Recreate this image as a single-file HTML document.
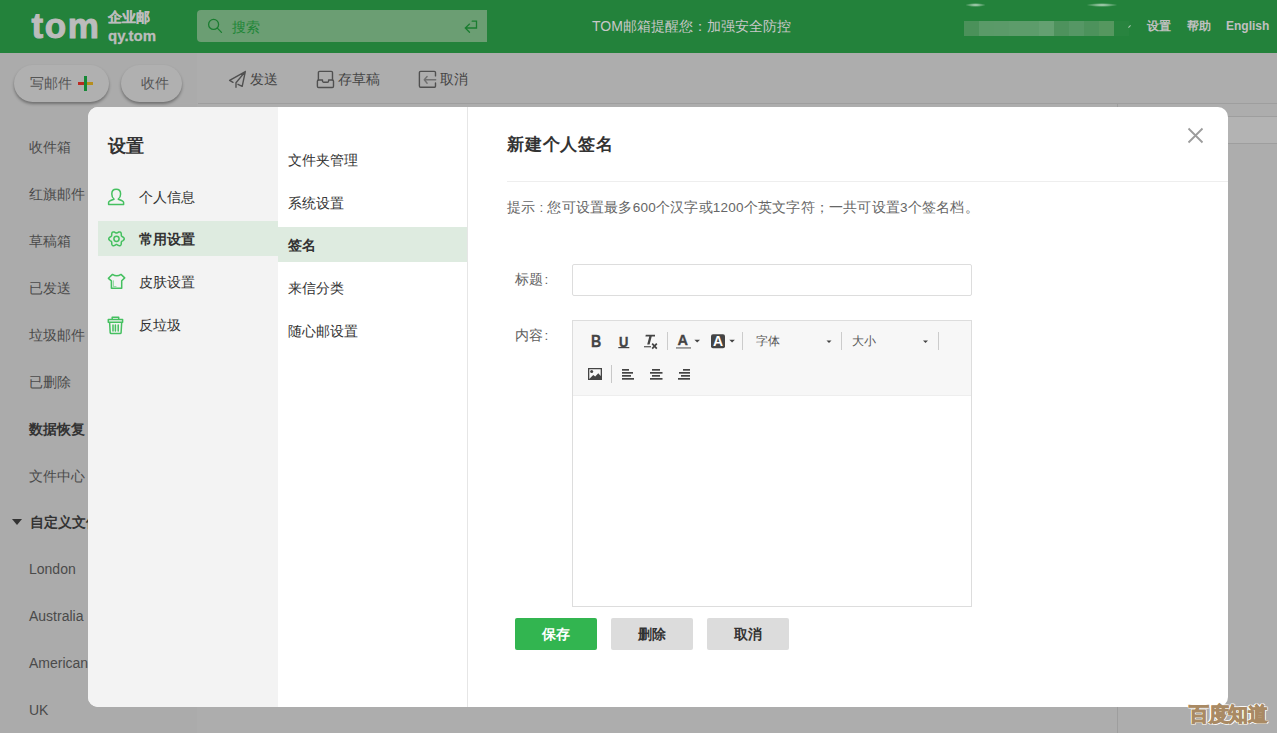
<!DOCTYPE html>
<html><head><meta charset="utf-8">
<style>
*{margin:0;padding:0;box-sizing:border-box}
html,body{width:1277px;height:733px;overflow:hidden;background:#adadad;font-family:"Liberation Sans",sans-serif;position:relative}
.a{position:absolute;white-space:nowrap}
svg{position:absolute;overflow:visible}
#hdr{position:absolute;left:0;top:0;width:1277px;height:53px;background:#23823b}
#side{position:absolute;left:0;top:53px;width:197px;height:680px;background:#ababab}
.si{position:absolute;margin-top:-1px;left:29px;font-size:14px;color:#4a4a4a;line-height:20px;white-space:nowrap}
.tb{position:absolute;top:69px;font-size:14px;color:#444;line-height:20px;white-space:nowrap}
#modal{position:absolute;left:88px;top:107px;width:1140px;height:600px;background:#fff;border-radius:10px;overflow:hidden}
#mleft{position:absolute;left:0;top:0;width:190px;height:600px;background:#f3f3f3}
#mmid{position:absolute;left:190px;top:0;width:190px;height:600px;background:#fff;border-right:1px solid #e6e6e6}
.mi{position:absolute;font-size:14px;color:#333;line-height:20px;white-space:nowrap}
.btn{position:absolute;top:511px;width:82px;height:32px;border-radius:2px;font-size:14px;line-height:32px;text-align:center;font-weight:bold}
.sep{position:absolute;width:1px;background:#ccc}
.ed{position:absolute;font-size:16px;font-weight:bold;color:#444;line-height:16px}
</style></head><body>
<div id="hdr">
  <div class="a" style="left:31.5px;top:5.5px;font-size:35px;line-height:40px;font-weight:bold;color:#bcbcbc;letter-spacing:1.6px;-webkit-text-stroke:1px #bcbcbc">tom</div>
  <div class="a" style="left:108px;top:9px;font-size:14px;font-weight:bold;color:#bcbcbc;line-height:16px;-webkit-text-stroke:0.3px #bcbcbc">企业邮</div>
  <div class="a" style="left:108px;top:27px;font-size:15px;font-weight:bold;color:#bcbcbc;line-height:18px;-webkit-text-stroke:0.3px #bcbcbc">qy.tom</div>
  <div class="a" style="left:197px;top:10px;width:290px;height:32px;background:#6b9e73;border-radius:4px 0 0 4px"></div>
  <svg style="left:0;top:0" width="1" height="1"><g fill="none" stroke="#1a7d30" stroke-width="1.3" stroke-linecap="round">
    <circle cx="213.6" cy="24.4" r="5"/><path d="M217.6 28.4L221.5 32.4"/>
    <path d="M472.2 21.2H476.5V28H465.3M469.5 24.1L465.3 28L469.5 32.3"/>
  </g></svg>
  <div class="a" style="left:232px;top:17px;font-size:14px;color:#1f8738;line-height:20px">搜索</div>
  <div class="a" style="left:592px;top:16px;font-size:14px;color:#c8c8c8;line-height:20px">TOM邮箱提醒您：加强安全防控</div>
  <div class="a" style="left:964px;top:21px;height:15px;display:flex">
    <i style="width:15px;background:#4b915a"></i><i style="width:15px;background:#5a9a68"></i><i style="width:15px;background:#5b9a69"></i><i style="width:15px;background:#5d9c6b"></i><i style="width:15px;background:#5d9c6b"></i><i style="width:15px;background:#64a071"></i><i style="width:15px;background:#4e925d"></i><i style="width:15px;background:#569765"></i><i style="width:15px;background:#4d925c"></i><i style="width:15px;background:#55975f"></i><i style="width:15px;background:#28843f"></i>
  </div>
  <div class="a" style="left:965px;top:3px;width:21px;height:4px;border-radius:50%;background:radial-gradient(ellipse at center,rgba(230,240,232,.8),rgba(230,240,232,0) 70%)"></div>
  <div class="a" style="left:1086px;top:3px;width:32px;height:4px;border-radius:50%;background:radial-gradient(ellipse at center,rgba(230,240,232,.8),rgba(230,240,232,0) 70%)"></div>
  <div class="a" style="left:1128px;top:26px;width:3px;height:1px;background:#a9c8b0;transform:rotate(-45deg)"></div>
  <div class="a" style="left:1147px;top:17px;font-size:12px;font-weight:bold;color:#c0c0c0;line-height:18px">设置</div>
  <div class="a" style="left:1187px;top:17px;font-size:12px;font-weight:bold;color:#c0c0c0;line-height:18px">帮助</div>
  <div class="a" style="left:1226px;top:17px;font-size:12px;font-weight:bold;color:#c0c0c0;line-height:18px">English</div>
</div>
<div id="side">
  <div class="si" style="top:85px">收件箱</div>
  <div class="si" style="top:132px">红旗邮件</div>
  <div class="si" style="top:179px">草稿箱</div>
  <div class="si" style="top:226px">已发送</div>
  <div class="si" style="top:273px">垃圾邮件</div>
  <div class="si" style="top:320px">已删除</div>
  <div class="si" style="top:367px;font-weight:bold;color:#333">数据恢复</div>
  <div class="si" style="top:414px">文件中心</div>
  <div class="a" style="left:12px;top:466px;width:0;height:0;border-left:5.5px solid transparent;border-right:5.5px solid transparent;border-top:6.5px solid #333"></div>
  <div class="si" style="left:30px;top:460px;font-weight:bold;color:#333">自定义文件夹</div>
  <div class="si" style="top:507px">London</div>
  <div class="si" style="top:554px">Australia</div>
  <div class="si" style="top:601px">American</div>
  <div class="si" style="top:648px">UK</div>
</div>
<!-- right panel lines -->
<div class="a" style="left:198px;top:103px;width:1079px;height:1px;background:#9e9e9e"></div>
<div class="a" style="left:1117px;top:103px;width:1px;height:630px;background:#9e9e9e"></div>
<div class="a" style="left:1117px;top:116px;width:160px;height:28px;background:#b3b3b3;border-top:1px solid #9e9e9e;border-bottom:1px solid #9e9e9e"></div>

<div class="a" style="left:14px;top:65px;width:95px;height:37px;border-radius:19px;background:#b0b0b0;box-shadow:0 2px 3px rgba(0,0,0,.35)"></div>
<div class="a" style="left:30px;top:73px;font-size:14px;color:#555;line-height:20px">写邮件</div>
<div class="a" style="left:78px;top:82px;width:6px;height:3px;background:#bb2a22"></div>
<div class="a" style="left:84px;top:82px;width:9px;height:3px;background:#b68e1e"></div>
<div class="a" style="left:84px;top:76px;width:3px;height:15px;background:#168936"></div>
<div class="a" style="left:121px;top:65px;width:61px;height:37px;border-radius:19px;background:#b0b0b0;box-shadow:0 2px 3px rgba(0,0,0,.35)"></div>
<div class="a" style="left:141px;top:73px;font-size:14px;color:#555;line-height:20px">收件</div>
<svg style="left:0;top:0" width="1" height="1"><g fill="none" stroke="#505050" stroke-width="1.4" stroke-linejoin="round" stroke-linecap="round">
  <path d="M245.3 71.6L229.6 80.4L233 82.3M245.3 71.6L236 82.8V87.3M245.3 71.6L242.2 86.3L238 84.3"/>
  <path d="M318.4 80V72.6a1.2 1.2 0 0 1 1.2-1.2H331.3a1.2 1.2 0 0 1 1.2 1.2V80"/>
  <path d="M317.4 81.2a1.2 1.2 0 0 1 1.2-1.2H322.5V81a1.2 1.2 0 0 0 1.2 1.2H327.4a1.2 1.2 0 0 0 1.2-1.2V80H332.3a1.2 1.2 0 0 1 1.2 1.2V86.3a1.2 1.2 0 0 1-1.2 1.2H318.6a1.2 1.2 0 0 1-1.2-1.2Z"/>
  <path d="M435.5 75.9V72.6a1.2 1.2 0 0 0-1.2-1.2H420.6a1.2 1.2 0 0 0-1.2 1.2V86.1a1.2 1.2 0 0 0 1.2 1.2H434.3a1.2 1.2 0 0 0 1.2-1.2V83"/>
  <path d="M435.7 79.8H424.3M427.1 76.5L424.3 79.8L427.1 83.2" stroke="#707070"/>
</g></svg>
<div class="tb" style="left:250px">发送</div>
<div class="tb" style="left:338px">存草稿</div>
<div class="tb" style="left:440px">取消</div>

<div id="modal">
  <div id="mleft">
    <div class="mi" style="left:20px;top:27px;font-size:17.7px;font-weight:bold;line-height:24px">设置</div>
    <div class="a" style="left:10px;top:114px;width:180px;height:35px;background:#deebe0"></div>
    <div class="mi" style="left:51px;top:80px">个人信息</div>
    <div class="mi" style="left:51px;top:122px;font-weight:bold">常用设置</div>
    <div class="mi" style="left:51px;top:165px">皮肤设置</div>
    <div class="mi" style="left:51px;top:208px">反垃圾</div>
  </div>
  <div id="mmid">
    <div class="a" style="left:0;top:120px;width:189px;height:35px;background:#deebe0"></div>
    <div class="mi" style="left:10px;top:43px">文件夹管理</div>
    <div class="mi" style="left:10px;top:86px">系统设置</div>
    <div class="mi" style="left:10px;top:128px;font-weight:bold">签名</div>
    <div class="mi" style="left:10px;top:171px">来信分类</div>
    <div class="mi" style="left:10px;top:214px">随心邮设置</div>
  </div>
  <svg style="left:0;top:0" width="1" height="1"><g stroke="#9c9c9c" stroke-width="1.8"><path d="M1100.5 21.5L1114.5 35.5M1114.5 21.5L1100.5 35.5"/></g></svg>
  <div class="mi" style="left:419px;top:26px;font-size:17px;letter-spacing:0.8px;font-weight:bold;line-height:24px">新建个人签名</div>
  <div class="a" style="left:419px;top:74px;width:721px;height:1px;background:#eee"></div>
  <div class="mi" style="left:419px;top:91px;font-size:13.5px;letter-spacing:0.22px;color:#666">提示 : 您可设置最多600个汉字或1200个英文字符；一共可设置3个签名档。</div>
  <div class="mi" style="left:427px;top:163px;font-size:13.5px;color:#606060">标题<span style="margin-left:1.5px">:</span></div>
  <div class="a" style="left:484px;top:157px;width:400px;height:32px;border:1px solid #ddd;border-radius:2px"></div>
  <div class="mi" style="left:427px;top:219px;font-size:13.5px;color:#606060">内容<span style="margin-left:1.5px">:</span></div>
  <div class="a" style="left:484px;top:213px;width:400px;height:287px;border:1px solid #ddd"></div>
  <div class="a" style="left:485px;top:214px;width:398px;height:75px;background:#f7f7f7;border-bottom:1px solid #eee"></div>
  <!-- editor toolbar row1 : y offset modal top 107 -->
  <div class="ed" style="left:503px;top:226px;font-size:16.5px;-webkit-text-stroke:0.3px #444;transform:scaleX(0.86);transform-origin:0 0">B</div>
  <div class="ed" style="left:530.8px;top:226.8px;font-size:15.4px;-webkit-text-stroke:0.4px #444;transform:scaleX(0.84);transform-origin:0 0">U</div>
  
  <div class="ed" style="left:589.5px;top:226px;font-size:14.5px;line-height:14px;-webkit-text-stroke:0.3px #444">A</div>
  
  <div class="sep" style="left:579px;top:225px;height:18px"></div>
  <div class="sep" style="left:654px;top:225px;height:18px"></div>
  <div class="sep" style="left:753px;top:225px;height:18px"></div>
  <div class="sep" style="left:850px;top:225px;height:18px"></div>
  
  <div class="mi" style="left:668px;top:224px;font-size:12px;color:#555">字体</div>
  <div class="mi" style="left:764px;top:224px;font-size:12px;color:#555">大小</div>
  <div class="btn" style="left:427px;background:#32b550;color:#fff">保存</div>
  <div class="btn" style="left:523px;background:#dcdcdc;color:#333">删除</div>
  <div class="btn" style="left:619px;background:#dcdcdc;color:#333">取消</div>
</div>
<svg style="left:0;top:0" width="1277" height="733" viewBox="0 0 1277 733">
<g fill="none" stroke="#45c060" stroke-width="1.5" stroke-linejoin="round" stroke-linecap="round">
 <path d="M114 199C112.3 197.8 111.8 196 111.8 194C111.8 191 113.6 189.3 116.2 189.3C118.8 189.3 120.6 191 120.6 194C120.6 196 120 197.8 118.3 199L118.3 199.3C120.5 200 123.6 200.8 123.6 202.6V204.6H108.6V202.6C108.6 200.8 111.8 200 114 199.3Z"/>
 <path d="M124.25 238.80 L124.16 239.30 L123.89 239.77 L123.50 240.19 L123.02 240.55 L122.53 240.85 L122.08 241.11 L121.73 241.38 L121.48 241.68 L121.34 242.04 L121.29 242.48 L121.29 243.00 L121.27 243.57 L121.20 244.16 L121.04 244.72 L120.76 245.18 L120.38 245.51 L119.89 245.68 L119.35 245.69 L118.79 245.55 L118.25 245.32 L117.74 245.04 L117.29 244.79 L116.88 244.61 L116.50 244.55 L116.12 244.61 L115.71 244.79 L115.26 245.04 L114.75 245.32 L114.21 245.55 L113.65 245.69 L113.11 245.68 L112.62 245.51 L112.24 245.18 L111.96 244.72 L111.80 244.16 L111.73 243.57 L111.71 243.00 L111.71 242.48 L111.66 242.04 L111.52 241.68 L111.27 241.38 L110.92 241.11 L110.47 240.85 L109.98 240.55 L109.50 240.19 L109.11 239.77 L108.84 239.30 L108.75 238.80 L108.84 238.30 L109.11 237.83 L109.50 237.41 L109.98 237.05 L110.47 236.75 L110.92 236.49 L111.27 236.22 L111.52 235.93 L111.66 235.56 L111.71 235.12 L111.71 234.60 L111.73 234.03 L111.80 233.44 L111.96 232.88 L112.24 232.42 L112.62 232.09 L113.11 231.92 L113.65 231.91 L114.21 232.05 L114.75 232.28 L115.26 232.56 L115.71 232.81 L116.12 232.99 L116.50 233.05 L116.88 232.99 L117.29 232.81 L117.74 232.56 L118.25 232.28 L118.79 232.05 L119.35 231.91 L119.89 231.92 L120.38 232.09 L120.76 232.42 L121.04 232.88 L121.20 233.44 L121.27 234.03 L121.29 234.60 L121.29 235.12 L121.34 235.56 L121.48 235.93 L121.73 236.22 L122.08 236.49 L122.53 236.75 L123.02 237.05 L123.50 237.41 L123.89 237.83 L124.16 238.30Z"/>
 <circle cx="116.5" cy="238.8" r="2.6"/>
 <path d="M112.5 274.4Q116.8 277.2 121 274.4L124.7 277.9L121.7 280.8V288.2H111.4V280.8L108.4 278.3Z"/>
 <path d="M113.4 280.8V286.5H116" stroke="#9ad9a8" stroke-width="1.2"/>
 <path d="M112.2 319.4V317.3H118.7V319.4M108.3 319.4H122.6V322.3H108.3ZM109.6 322.3L110.2 332.6Q110.3 333.5 111.2 333.5H120.1Q121 333.5 121.1 332.6L121.7 322.3M113 324.9V331.1M115.4 324.9V331.1M118.2 324.9V331.1"/>
</g>
<g fill="#444">
 <path d="M645.8 334.8H655V336.4H651.7L649.6 344.6H647.2L649.3 336.4H645.4Z"/>
 <rect x="644" y="346.2" width="7" height="1.1"/>
 <path d="M694.4 339.8h5.6l-2.8 2.8z"/>
 <path d="M729.3 339.8h5.6l-2.8 2.8z"/>
 <path d="M826.5 340.5h5l-2.5 2.5z"/>
 <path d="M923 340.5h5l-2.5 2.5z"/>
 <rect x="711" y="334.2" width="14" height="14" rx="2"/>
 <rect x="622" y="369" width="7" height="1.7"/><rect x="622" y="372" width="11" height="1.7"/><rect x="622" y="375" width="9" height="1.7"/><rect x="622" y="378" width="12" height="1.7"/>
 <rect x="652" y="369" width="8" height="1.7"/><rect x="650" y="372" width="12.5" height="1.7"/><rect x="652" y="375" width="8" height="1.7"/><rect x="650" y="378" width="12.5" height="1.7"/>
 <rect x="683" y="369" width="7" height="1.7"/><rect x="679" y="372" width="11" height="1.7"/><rect x="681" y="375" width="9" height="1.7"/><rect x="678" y="378" width="12" height="1.7"/>
 <path d="M588 368H602V380H588ZM589.3 369.3V379L593.2 374.9L595.2 376.6L598.3 373.2L600.7 376V369.3Z" fill-rule="evenodd"/>
 <circle cx="591.7" cy="371.5" r="1.5"/>
</g>
<path d="M652.2 343.6L656.8 348.6M656.8 343.6L652.2 348.6" stroke="#444" stroke-width="1.7"/>
<rect x="676" y="347" width="15" height="1.8" fill="#999"/>
<rect x="618.3" y="347" width="11" height="1.2" fill="#444"/>
<rect x="611" y="365" width="1" height="18" fill="#c8c8c8"/>
</svg>
<div class="ed" style="left:713px;top:333.6px;color:#fff;font-size:14px;line-height:14px">A</div>
<div class="a" style="left:1189px;top:700px;font-size:20px;font-weight:900;color:#a98a64;line-height:28px;-webkit-text-stroke:1px #a98a64;letter-spacing:-0.5px;text-shadow:1.2px 0 #fff,-1.2px 0 #fff,0 1.2px #fff,0 -1.2px #fff,1px 1px #fff,-1px -1px #fff,1px -1px #fff,-1px 1px #fff">百度知道</div>
</body></html>
